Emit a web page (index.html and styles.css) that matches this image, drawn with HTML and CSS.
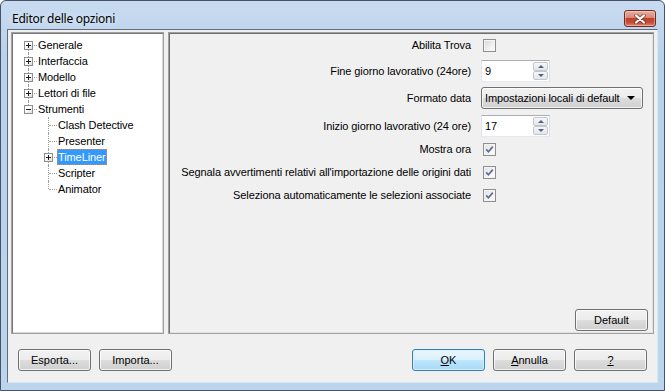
FILE: index.html
```html
<!doctype html>
<html>
<head>
    <meta charset="utf-8">
    <link rel="stylesheet" href="styles.css">
</head>
<body>

<div class="window">

    <div class="titlebar">
        <span class="title">Editor delle opzioni</span>
        <span class="close">
            <svg width="14" height="10" viewBox="0 0 14 10">
                <path d="M3 1.5 L11 8.5 M11 1.5 L3 8.5" stroke="#5a2118" stroke-width="4" stroke-linecap="round" opacity="0.55"/>
                <path d="M3 1.5 L11 8.5 M11 1.5 L3 8.5" stroke="#fff" stroke-width="2.2" stroke-linecap="round"/>
            </svg>
        </span>
    </div>

    <div class="client">
        <div class="panes">

            <div class="tree">
                <ul class="tree-root">
                    <li><div class="item"><span class="twig"><i class="box plus"></i></span><span class="text">Generale</span></div></li>
                    <li><div class="item"><span class="twig"><i class="box plus"></i></span><span class="text">Interfaccia</span></div></li>
                    <li><div class="item"><span class="twig"><i class="box plus"></i></span><span class="text">Modello</span></div></li>
                    <li><div class="item"><span class="twig"><i class="box plus"></i></span><span class="text">Lettori di file</span></div></li>
                    <li class="last">
                        <div class="item"><span class="twig"><i class="box"></i></span><span class="text">Strumenti</span></div>
                        <ul class="tree-sub">
                            <li><div class="item"><span class="twig"></span><span class="text">Clash Detective</span></div></li>
                            <li><div class="item"><span class="twig"></span><span class="text">Presenter</span></div></li>
                            <li><div class="item"><span class="twig"><i class="box plus"></i></span><span class="text selected">TimeLiner</span></div></li>
                            <li><div class="item"><span class="twig"></span><span class="text">Scripter</span></div></li>
                            <li class="last"><div class="item"><span class="twig"></span><span class="text">Animator</span></div></li>
                        </ul>
                    </li>
                </ul>
            </div>

            <div class="page">
                <div class="fields">
                    <div class="row">
                        <span class="label">Abilita Trova</span>
                        <div class="ctl"><span class="check"></span></div>
                    </div>
                    <div class="row">
                        <span class="label">Fine giorno lavorativo (24ore)</span>
                        <div class="ctl">
                            <div class="spin">
                                <span class="spin-value">9</span>
                                <span class="spin-btns">
                                    <span class="spin-btn"><i class="arrow-up"></i></span>
                                    <span class="spin-btn"><i class="arrow-down"></i></span>
                                </span>
                            </div>
                        </div>
                    </div>
                    <div class="row gap5">
                        <span class="label">Formato data</span>
                        <div class="ctl">
                            <div class="combo">
                                <span>Impostazioni locali di default</span>
                                <i class="combo-arrow"></i>
                            </div>
                        </div>
                    </div>
                    <div class="row gap6">
                        <span class="label">Inizio giorno lavorativo (24 ore)</span>
                        <div class="ctl">
                            <div class="spin">
                                <span class="spin-value">17</span>
                                <span class="spin-btns">
                                    <span class="spin-btn"><i class="arrow-up"></i></span>
                                    <span class="spin-btn"><i class="arrow-down"></i></span>
                                </span>
                            </div>
                        </div>
                    </div>
                    <div class="row tight">
                        <span class="label">Mostra ora</span>
                        <div class="ctl"><span class="check checked"><svg width="9" height="9" viewBox="0 0 9 9"><path d="M1.2 4.4 L3.4 6.8 L7.8 1.6" fill="none" stroke="#5b6f9c" stroke-width="1.7"/></svg></span></div>
                    </div>
                    <div class="row tight">
                        <span class="label">Segnala avvertimenti relativi all'importazione delle origini dati</span>
                        <div class="ctl"><span class="check checked"><svg width="9" height="9" viewBox="0 0 9 9"><path d="M1.2 4.4 L3.4 6.8 L7.8 1.6" fill="none" stroke="#5b6f9c" stroke-width="1.7"/></svg></span></div>
                    </div>
                    <div class="row tight">
                        <span class="label">Seleziona automaticamente le selezioni associate</span>
                        <div class="ctl"><span class="check checked"><svg width="9" height="9" viewBox="0 0 9 9"><path d="M1.2 4.4 L3.4 6.8 L7.8 1.6" fill="none" stroke="#5b6f9c" stroke-width="1.7"/></svg></span></div>
                    </div>
                </div>

                <div class="page-foot">
                    <button class="btn">Default</button>
                </div>
            </div>
        </div>

        <div class="footer">
            <button class="btn">Esporta...</button>
            <button class="btn">Importa...</button>
            <span class="grow"></span>
            <button class="btn primary"><u>O</u>K</button>
            <button class="btn"><u>A</u>nnulla</button>
            <button class="btn"><u>?</u></button>
        </div>
    </div>
</div>

</body>
</html>
```

FILE: styles.css
```css
html,
body {
    margin: 0;
    padding: 0;
    background: #fff;
    font-family: "Liberation Sans", Arial, sans-serif;
    font-size: 11px;
    letter-spacing: -0.1px;
    color: #000;
}

ul {
    list-style: none;
    margin: 0;
    padding: 0;
}

.window {
    width: 665px;
    height: 391px;
    box-sizing: border-box;
    border: 1px solid #44526a;
    border-radius: 6px 6px 0 0;
    background: linear-gradient(#c8dbf1, #b9d1ea 60px, #bdd4ed);
    padding: 0 6px 7px 6px;
    display: flex;
    flex-direction: column;
}

.titlebar {
    height: 28px;
    flex: none;
    display: flex;
    align-items: flex-start;
}

.title {
    font-family: "Noto Sans", "Liberation Sans", sans-serif;
    font-size: 12px;
    letter-spacing: -0.25px;
    padding: 10px 0 0 5px;
    line-height: 16px;
    text-shadow: 0 0 6px rgba(255, 255, 255, 0.9);
    flex: 1;
}

.close {
    margin: 9px 2px 0 0;
    width: 32px;
    height: 17px;
    box-sizing: border-box;
    border: 1px solid #6e2c22;
    border-radius: 3px;
    background: linear-gradient(#eab0a3, #d68775 45%, #c1412c 50%, #c64a36 75%, #e0876b);
    box-shadow: inset 0 0 0 1px rgba(255, 220, 210, 0.45);
    display: flex;
    align-items: center;
    justify-content: center;
}

.client {
    flex: 1;
    display: flex;
    flex-direction: column;
    background: #f0f0f0;
    border: 1px solid;
    border-color: #5d6e82 #dbe6f3 #dbe6f3 #5d6e82;
    padding: 2px 3px 0 3px;
}

.panes {
    height: 302px;
    display: flex;
    gap: 4px;
}

/* tree */

.tree {
    width: 153px;
    flex: none;
    box-sizing: border-box;
    background: #fff;
    border: 1px solid #a0a0a0;
    box-shadow: inset 1px 1px 0 #7a7a7a, inset -1px -1px 0 #d8d8d8;
    padding: 4px 0 0 6px;
}

.tree-sub {
    padding-left: 20px;
}

.item {
    display: flex;
    height: 16px;
}

.twig {
    width: 19px;
    height: 16px;
    flex: none;
    position: relative;
}

.twig::before {
    content: "";
    position: absolute;
    left: 10px;
    top: 0;
    bottom: 0;
    border-left: 1px dotted #a0a0a0;
}

.twig::after {
    content: "";
    position: absolute;
    left: 11px;
    width: 8px;
    top: 8px;
    border-top: 1px dotted #a0a0a0;
}

.tree-root > li:first-child > .item .twig::before {
    top: 8px;
}

li.last > .item .twig::before {
    bottom: 8px;
}

.box {
    position: absolute;
    left: 6px;
    top: 4px;
    width: 9px;
    height: 9px;
    box-sizing: border-box;
    border: 1px solid #8e8e8e;
    background: linear-gradient(135deg, #fff 40%, #dcdcdc);
    z-index: 1;
}

.box::before {
    content: "";
    position: absolute;
    left: 1px;
    top: 3px;
    width: 5px;
    height: 1px;
    background: #1e1e1e;
}

.box.plus::after {
    content: "";
    position: absolute;
    left: 3px;
    top: 1px;
    width: 1px;
    height: 5px;
    background: #1e1e1e;
}

.text {
    line-height: 16px;
    padding: 0 1px;
    white-space: nowrap;
}

.selected {
    background: #3399ff;
    color: #fff;
    outline: 1px dotted #d9893a;
    outline-offset: -1px;
}

/* options page */

.page {
    flex: 1;
    box-sizing: border-box;
    border: 1px solid #a0a0a0;
    box-shadow: inset 1px 1px 0 #6f6f6f, inset -1px -1px 0 #e3e3e3;
    display: flex;
    flex-direction: column;
    padding: 1px 1px 2px 1px;
}

.fields {
    flex: 1;
}

.row {
    display: flex;
    align-items: center;
    height: 22px;
    margin-top: 4px;
}

.row:first-child {
    margin-top: 0;
}

.row.gap5 {
    margin-top: 5px;
}

.row.gap6 {
    margin-top: 6px;
}

.row.tight {
    margin-top: 1px;
}

.label {
    flex: 1;
    text-align: right;
    padding-right: 10px;
    white-space: nowrap;
}

.ctl {
    width: 171px;
    flex: none;
    display: flex;
}

.check {
    margin-left: 2px;
    width: 13px;
    height: 13px;
    box-sizing: border-box;
    border: 1px solid #8f8f8f;
    background: linear-gradient(135deg, #d6d6d6, #f7f7f7 75%);
    box-shadow: inset 0 0 0 1px #f4f4f4;
    display: flex;
    align-items: center;
    justify-content: center;
}

.check.checked {
    background: linear-gradient(135deg, #e0e0e0, #f9f9f9 75%);
}

.spin {
    width: 69px;
    height: 22px;
    box-sizing: border-box;
    border: 1px solid;
    border-color: #abadb3 #dbdfe6 #e3e9ef #e2e3ea;
    background: #fff;
    display: flex;
    align-items: center;
}

.spin-value {
    padding-left: 3px;
}

.spin-btns {
    margin-left: auto;
    margin-right: 1px;
    width: 15px;
    height: 18px;
    display: flex;
    flex-direction: column;
}

.spin-btn {
    flex: 1;
    border: 1px solid #c3c6cc;
    border-radius: 2px;
    background: linear-gradient(#f6f6f6, #e4e6ea);
    display: flex;
    align-items: center;
    justify-content: center;
}

.arrow-up,
.arrow-down {
    width: 0;
    height: 0;
    border-left: 3px solid transparent;
    border-right: 3px solid transparent;
}

.arrow-up {
    border-bottom: 3px solid #4f6389;
}

.arrow-down {
    border-top: 3px solid #4f6389;
}

.combo {
    width: 162px;
    height: 22px;
    box-sizing: border-box;
    border: 1px solid #707070;
    border-radius: 3px;
    background: linear-gradient(#f2f2f2, #ebebeb 50%, #dddddd 51%, #cfcfcf);
    box-shadow: inset 0 0 0 1px rgba(255, 255, 255, 0.7);
    display: flex;
    align-items: center;
    padding: 0 7px 0 3px;
    white-space: nowrap;
}

.combo-arrow {
    margin-left: auto;
    width: 0;
    height: 0;
    border-left: 4px solid transparent;
    border-right: 4px solid transparent;
    border-top: 4px solid #000;
}

.page-foot {
    display: flex;
    justify-content: flex-end;
    padding-right: 4px;
}

/* buttons */

.btn {
    width: 73px;
    height: 22px;
    box-sizing: border-box;
    border: 1px solid #707070;
    border-radius: 3px;
    background: linear-gradient(#f2f2f2, #ebebeb 50%, #dddddd 51%, #cfcfcf);
    box-shadow: inset 0 0 0 1px rgba(255, 255, 255, 0.75);
    font: inherit;
    color: #000;
    padding: 0;
    margin: 0;
}

.btn.primary {
    border-color: #3c7fb1;
    background: linear-gradient(#eaf6fd, #d9f0fc 50%, #bee6fd 51%, #a7d9f5);
    box-shadow: inset 0 0 0 1px rgba(210, 240, 255, 0.9);
}

.footer {
    display: flex;
    gap: 8px;
    padding: 15px 7px 0 7px;
}

.grow {
    flex: 1;
}
```
